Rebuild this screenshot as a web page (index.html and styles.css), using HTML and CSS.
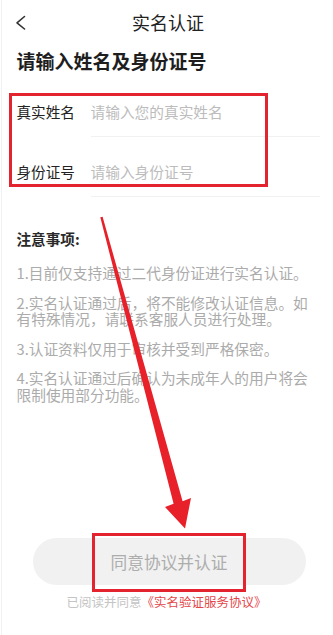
FILE: index.html
```html
<!DOCTYPE html>
<html lang="zh-CN">
<head>
<meta charset="utf-8">
<title>实名认证</title>
<link rel="stylesheet" href="styles.css">
</head>
<body>
<div class="page">
  <header class="topbar">
    <div class="back">
      <svg width="12" height="16" viewBox="0 0 12 16"><polyline points="9.5,1.5 2,7.8 9.5,14" fill="none" stroke="#333" stroke-width="1.6" stroke-linecap="round" stroke-linejoin="round"/></svg>
    </div>
    <h1 class="title">实名认证</h1>
    <div></div>
  </header>

  <h2 class="heading">请输入姓名及身份证号</h2>

  <div class="form">
    <div class="row">
      <span class="label">真实姓名</span>
      <span class="field">请输入您的真实姓名</span>
    </div>
    <div class="row">
      <span class="label">身份证号</span>
      <span class="field">请输入身份证号</span>
    </div>
  </div>

  <section class="notes">
    <h3 class="notes-title">注意事项:</h3>
    <p>1.目前仅支持通过二代身份证进行实名认证。</p>
    <p>2.实名认证通过后，将不能修改认证信息。如有特殊情况，请联系客服人员进行处理。</p>
    <p>3.认证资料仅用于审核并受到严格保密。</p>
    <p>4.实名认证通过后确认为未成年人的用户将会限制使用部分功能。</p>
  </section>

  <div class="actions">
    <button class="submit">同意协议并认证</button>
    <p class="agree">已阅读并同意<span class="link">《实名验证服务协议》</span></p>
  </div>

  <div class="mark mark-form"></div>
  <div class="mark mark-btn"></div>
  <svg class="arrow" width="333" height="635" viewBox="0 0 333 635">
    <polygon fill="#e8202a" points="100.3,217.3 102.6,216.7 182.6,501.2 191,498 185,528.5 165,507 173.6,503.8"/>
  </svg>
</div>
</body>
</html>
```

FILE: styles.css
```css
html, body {
  margin: 0;
  padding: 0;
  background: #fff;
}
body {
  font-family: "Noto Sans CJK SC", "Noto Sans", sans-serif;
  color: #222;
}
.page {
  position: relative;
  width: 333px;
  height: 635px;
  overflow: hidden;
  box-shadow: inset 1px 0 0 #fff, inset 2px 0 0 #f1f1f1;
}
.topbar {
  display: grid;
  grid-template-columns: 1fr auto 1fr;
  align-items: center;
  height: 43px;
}
.back {
  padding-left: 15px;
  display: flex;
  align-items: center;
  padding-top: 2px;
}
.title {
  margin: 0;
  padding-left: 3px;
  font-size: 18px;
  font-weight: 400;
  line-height: 24px;
  color: #222;
}
.heading {
  margin: 5px 0 0;
  padding-left: 16.5px;
  font-size: 19px;
  font-weight: 700;
  line-height: 26px;
  color: #1e1e1e;
}
.form {
  margin-top: 2.5px;
}
.row {
  display: flex;
  align-items: stretch;
  height: 60px;
}
.label {
  width: 74px;
  flex: none;
  padding-left: 16.5px;
  padding-top: 25px;
  white-space: nowrap;
  font-size: 14.6px;
  line-height: 20px;
  color: #222;
}
.field {
  flex: 1;
  margin-right: 13px;
  padding-top: 25px;
  border-bottom: 1px solid #f1f1f1;
  white-space: nowrap;
  font-size: 14.7px;
  line-height: 20px;
  color: #bcbcbc;
}
.notes {
  margin-top: 32px;
  padding: 0 19px 0 16.5px;
}
.notes-title {
  margin: 0 0 16.5px;
  font-size: 14.6px;
  font-weight: 700;
  line-height: 20px;
  color: #2a2a2a;
}
.notes p {
  margin: 0 0 13px;
  font-size: 14.7px;
  line-height: 16.5px;
  color: #ababab;
}
.notes p:last-child {
  margin-bottom: 0;
}
.actions {
  margin-top: 135px;
  display: flex;
  flex-direction: column;
  align-items: center;
}
.submit {
  margin-left: 5px;
  width: 273px;
  height: 47px;
  border: none;
  border-radius: 24px;
  background: #f1f1f1;
  font-family: inherit;
  font-size: 16.7px;
  color: #adadad;
  padding: 0;
}
.agree {
  margin: 9px 0 0;
  font-size: 12.5px;
  line-height: 16px;
  color: #c4c4c4;
}
.link {
  color: #e3474a;
}
.mark {
  position: absolute;
  box-sizing: border-box;
  border: 3px solid #e3232d;
}
.mark-form {
  left: 9px;
  top: 93px;
  width: 259px;
  height: 94px;
}
.mark-btn {
  left: 92px;
  top: 533px;
  width: 154px;
  height: 59px;
}
.arrow {
  position: absolute;
  left: 0;
  top: 0;
  pointer-events: none;
}
```
